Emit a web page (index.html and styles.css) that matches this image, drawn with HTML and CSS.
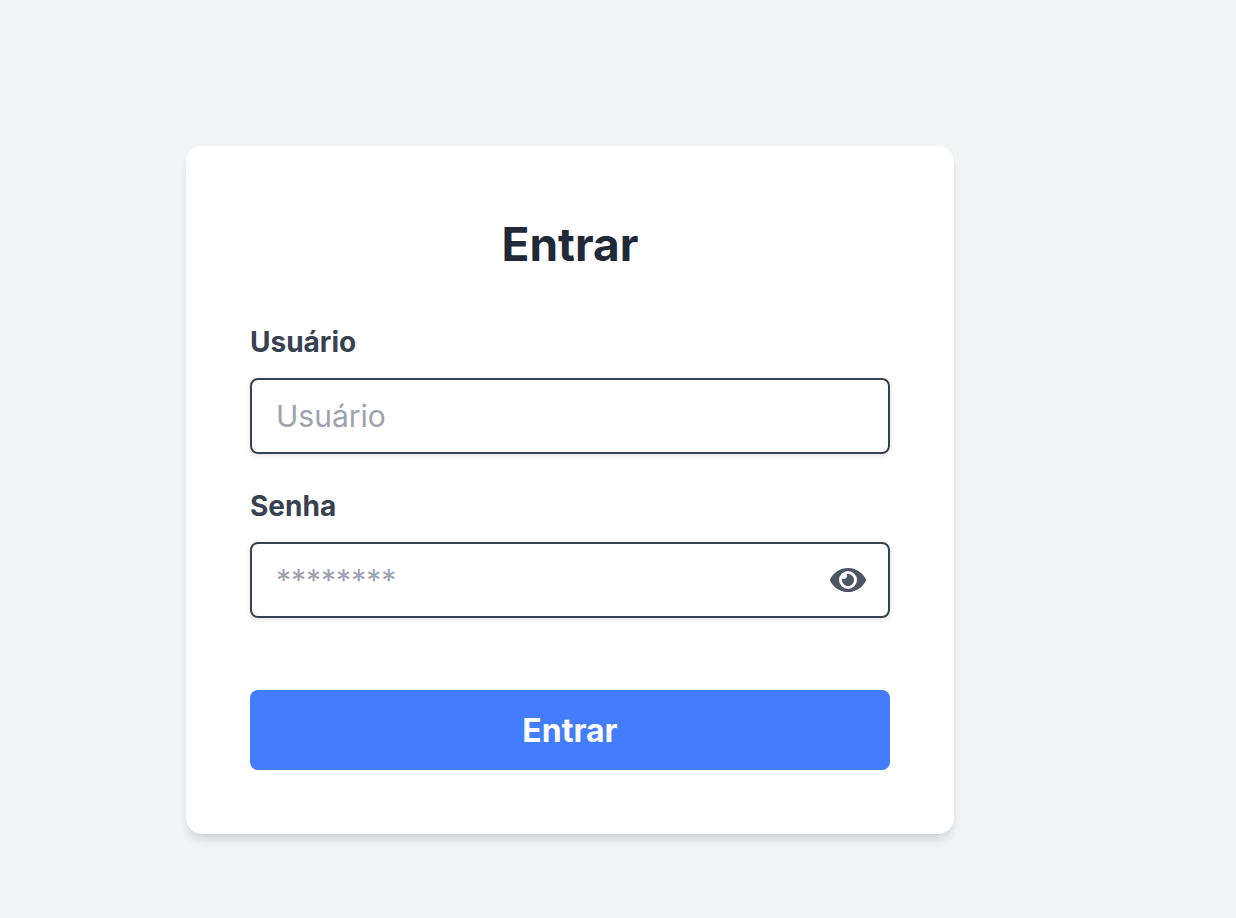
FILE: index.html
```html
<!DOCTYPE html>
<html lang="pt-BR">
<head>
<meta charset="utf-8">
<meta name="viewport" content="width=device-width, initial-scale=1">
<title>Entrar</title>
<link rel="stylesheet" href="styles.css">
</head>
<body>
<main class="page">
  <form class="card">
    <h1 class="title">Entrar</h1>
    <div class="field">
      <label class="label" for="user">Usuário</label>
      <input class="input" id="user" type="text" placeholder="Usuário">
    </div>
    <div class="field">
      <label class="label" for="password">Senha</label>
      <div class="password">
        <input class="input input-password" id="password" type="password" placeholder="********">
        <button class="toggle" type="button" aria-label="Mostrar senha">
          <svg class="eye" viewBox="0 0 576 512" aria-hidden="true"><path fill="currentColor" d="M572.52 241.4C518.29 135.59 410.93 64 288 64S57.68 135.64 3.48 241.41a32.35 32.35 0 0 0 0 29.19C57.71 376.41 165.07 448 288 448s230.32-71.64 284.52-177.41a32.35 32.35 0 0 0 0-29.19zM288 400a144 144 0 1 1 144-144 143.93 143.93 0 0 1-144 144zm0-240a95.31 95.31 0 0 0-25.31 3.79 47.85 47.85 0 0 1-66.9 66.9A95.78 95.78 0 1 0 288 160z"/></svg>
        </button>
      </div>
    </div>
    <button class="submit" type="submit">Entrar</button>
  </form>
</main>
</body>
</html>
```
FILE: styles.css
```css
* {
  box-sizing: border-box;
}

body {
  margin: 0;
  background: #f3f4f6;
  color: #1f2937;
  font-family: Inter, "Liberation Sans", sans-serif;
}

.page {
  display: flex;
  justify-content: center;
  align-items: flex-start;
  min-height: 100vh;
  padding: 146px 96px 84px 0;
}

.card {
  display: flex;
  flex-direction: column;
  width: 100%;
  max-width: 768px;
  padding: 64px;
  background: #fff;
  border-radius: 16px;
  box-shadow: 0 8px 12px -2px rgba(0, 0, 0, 0.1), 0 4px 8px -4px rgba(0, 0, 0, 0.1);
}

.title {
  margin: 0 0 44px;
  font-size: 46px;
  line-height: 68px;
  font-weight: 700;
  text-align: center;
}

.field {
  margin-bottom: 32px;
}

.label {
  display: block;
  margin-bottom: 16px;
  color: #374151;
  font-size: 28px;
  line-height: 40px;
  font-weight: 700;
}

.input {
  display: block;
  width: 100%;
  height: 76px;
  padding: 0 24px;
  border: 2px solid #374151;
  border-radius: 8px;
  background: #fff;
  box-shadow: 0 2px 6px rgba(0, 0, 0, 0.1);
  color: #374151;
  font: inherit;
  font-size: 30px;
}

.input::placeholder {
  color: #9ca3af;
  opacity: 1;
}

.password {
  position: relative;
}

.input-password {
  padding-right: 80px;
}

.toggle {
  position: absolute;
  top: 0;
  right: 0;
  bottom: 0;
  display: flex;
  align-items: center;
  padding: 0 24px;
  border: 0;
  background: none;
  color: #4b5563;
  cursor: pointer;
}

.eye {
  width: 36px;
  height: 32px;
}

.submit {
  height: 80px;
  margin-top: 40px;
  border: 0;
  border-radius: 8px;
  background: #437dfb;
  color: #fff;
  font: inherit;
  font-size: 32px;
  font-weight: 700;
  cursor: pointer;
}
```
